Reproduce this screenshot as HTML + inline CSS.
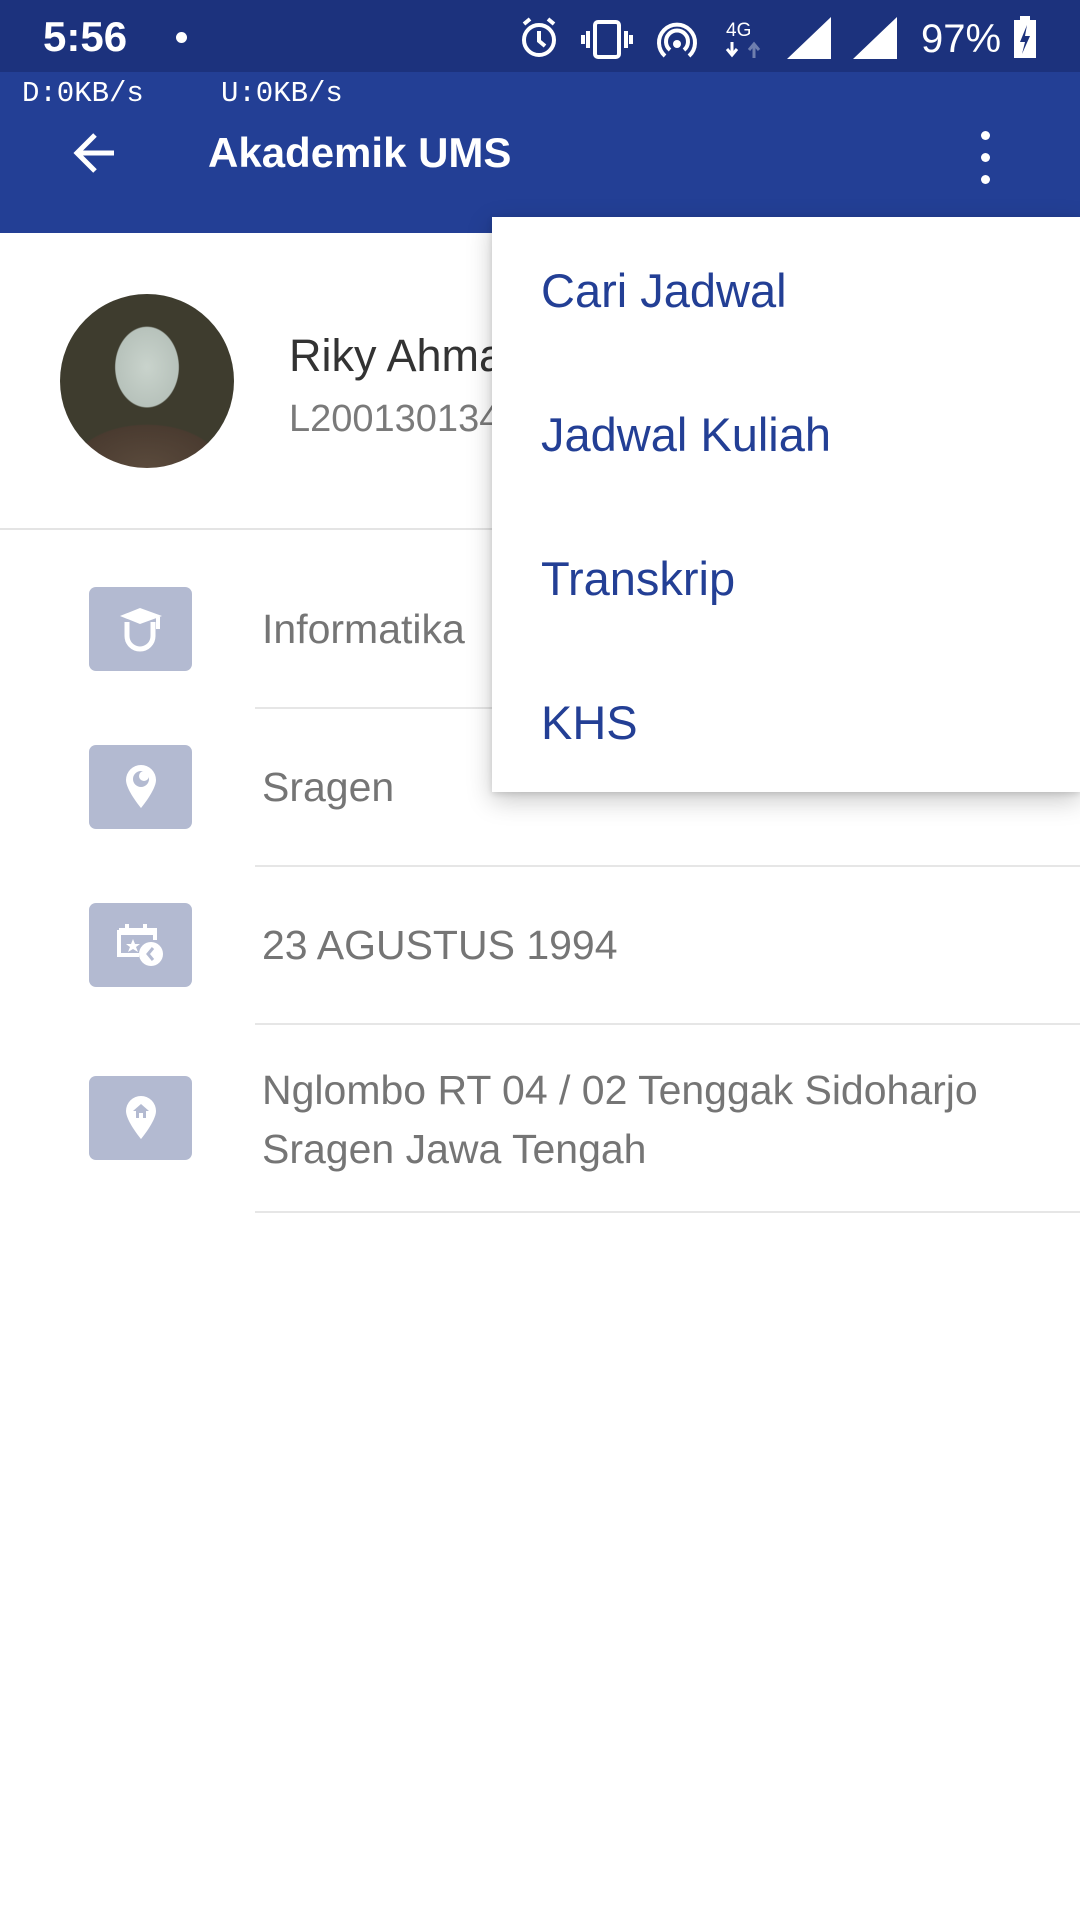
<!DOCTYPE html>
<html><head><meta charset="utf-8"><style>
*{margin:0;padding:0;box-sizing:border-box}
body{width:1080px;height:1920px;background:#fff;position:relative;overflow:hidden;font-family:"Liberation Sans",Roboto,sans-serif}
.abs{position:absolute}
.status{left:0;top:0;width:1080px;height:72px;background:#1c327d}
.bar{left:0;top:72px;width:1080px;height:161px;background:#233f95}
.t{white-space:nowrap;line-height:1}
.menu{left:492px;top:217px;width:588px;height:575px;background:#fff;box-shadow:0 8px 24px rgba(0,0,0,.22),0 2px 6px rgba(0,0,0,.12)}
.mi{position:absolute;left:49px;font-size:47px;color:#233f95;line-height:1}
.box{left:89px;width:103px;height:84px;background:#b3bad1;border-radius:7px}
.row{left:262px;font-size:41px;color:#757575;line-height:1}
.hr{left:255px;width:825px;height:2px;background:#e6e6e6}
</style></head><body>
<div class="abs status"></div>
<div class="abs bar"></div>
<div class="abs t" style="left:43px;top:16px;font-size:42px;color:#fff;font-weight:bold">5:56</div>
<div class="abs" style="left:176px;top:32px;width:11px;height:11px;border-radius:50%;background:#fff"></div>
<svg class="abs" style="left:520px;top:14px" width="520" height="48" viewBox="520 14 520 48">
 <g fill="none" stroke="#fff" stroke-width="4">
  <circle cx="539" cy="40" r="15"/><path d="M539 31v10l6 5M524 24l6-5M554 24l-6-5"/>
  <rect x="595" y="22" width="24" height="35" rx="3"/><path d="M588 31v17M626 31v17M583 35v9M631 35v9"/>
  <path d="M665 56a18 18 0 1 1 24 0M670 50a11 11 0 1 1 14 0"/>
 </g>
 <circle cx="677" cy="44" r="4" fill="#fff"/>
 <text x="726" y="36" font-size="19" fill="#fff" font-family="Liberation Sans">4G</text>
 <path d="M732 42v12M727 49l5 6 5-6" stroke="#fff" stroke-width="3" fill="none"/>
 <path d="M754 58v-13M749 50l5-6 5 6" stroke="#6f7fae" stroke-width="3" fill="none"/>
 <path d="M787 59L831 17V59Z M853 59L897 17V59Z" fill="#fff"/>
 <text x="921" y="52" font-size="40" fill="#fff" font-family="Liberation Sans">97%</text>
 <rect x="1014" y="20" width="22" height="38" fill="#fff"/><rect x="1020" y="16" width="10" height="5" fill="#fff"/>
 <path d="M1027 25l-7 17h5l-3 12 8-18h-5z" fill="#1c327d"/>
</svg>
<div class="abs t" style="left:22px;top:79px;font-size:29px;color:#fff;font-family:'Liberation Mono',monospace">D:0KB/s</div>
<div class="abs t" style="left:221px;top:79px;font-size:29px;color:#fff;font-family:'Liberation Mono',monospace">U:0KB/s</div>
<svg class="abs" style="left:70px;top:130px" width="50" height="46" viewBox="0 0 50 46"><path d="M44 23H8M25 5L7 23l18 18" stroke="#fff" stroke-width="5" fill="none"/></svg>
<div class="abs t" style="left:208px;top:132px;font-size:42px;color:#fff;font-weight:bold">Akademik UMS</div>
<div class="abs" style="left:981px;top:131px;width:9px;height:9px;border-radius:50%;background:#fff;box-shadow:0 22px 0 #fff,0 44px 0 #fff"></div>

<div class="abs" style="left:60px;top:294px;width:174px;height:174px;border-radius:50%;background:radial-gradient(ellipse 30% 38% at 50% 42%,#c9d3cc 0,#b7c2bb 60%,transparent 62%),radial-gradient(ellipse 60% 35% at 50% 100%,#5a4a3c 0,#4a3b30 70%,transparent 72%),#3e3c2e;overflow:hidden"></div>
<div class="abs t" style="left:289px;top:333px;font-size:45px;color:#333">Riky Ahmad</div>
<div class="abs t" style="left:289px;top:400px;font-size:38px;color:#7a7a7a">L200130134</div>
<div class="abs" style="left:0;top:528px;width:1080px;height:2px;background:#e4e4e4"></div>

<div class="abs box" style="top:587px"></div>
<svg class="abs" style="left:116px;top:602px" width="50" height="54" viewBox="0 0 50 54"><path d="M4 14L24 6 46 14 24 22Z" fill="#fff"/><path d="M42 15v12" stroke="#fff" stroke-width="4"/><path d="M11 20v14a13 13 0 0 0 26 0V20" stroke="#fff" stroke-width="5" fill="none"/></svg>
<div class="abs row" style="top:609px">Informatika</div>
<div class="abs hr" style="top:707px"></div>

<div class="abs box" style="top:745px"></div>
<svg class="abs" style="left:124px;top:763px" width="34" height="48" viewBox="0 0 34 48"><path d="M17 2a15 15 0 0 0-15 15c0 10 15 28 15 28s15-18 15-28A15 15 0 0 0 17 2z" fill="#fff"/><circle cx="17" cy="16" r="8" fill="#b3bad1"/><circle cx="20" cy="13" r="5" fill="#fff"/></svg>
<div class="abs row" style="top:767px">Sragen</div>
<div class="abs hr" style="top:865px"></div>

<div class="abs box" style="top:903px"></div>
<svg class="abs" style="left:116px;top:920px" width="50" height="50" viewBox="0 0 50 50"><path d="M11 4v6M29 4v6" stroke="#fff" stroke-width="4"/><path d="M3 10h36v10M3 10v25h20" stroke="#fff" stroke-width="4" fill="none"/><path d="M3 10h36v5H3z" fill="#fff"/><path d="M17 19l2 5h5l-4 3 2 5-5-3-5 3 2-5-4-3h5z" fill="#fff"/><circle cx="35" cy="34" r="12" fill="#fff"/><path d="M37 28l-5 6 5 6" stroke="#b3bad1" stroke-width="3" fill="none"/></svg>
<div class="abs row" style="top:925px">23 AGUSTUS 1994</div>
<div class="abs hr" style="top:1023px"></div>

<div class="abs box" style="top:1076px"></div>
<svg class="abs" style="left:124px;top:1094px" width="34" height="48" viewBox="0 0 34 48"><path d="M17 2a15 15 0 0 0-15 15c0 10 15 28 15 28s15-18 15-28A15 15 0 0 0 17 2z" fill="#fff"/><path d="M9 17l8-7 8 7h-3v7h-3v-5h-4v5h-3v-7z" fill="#b3bad1"/></svg>
<div class="abs row" style="top:1070px">Nglombo RT 04 / 02 Tenggak Sidoharjo</div>
<div class="abs row" style="top:1129px">Sragen Jawa Tengah</div>
<div class="abs hr" style="top:1211px"></div>

<div class="abs menu">
 <div class="mi" style="top:50px">Cari Jadwal</div>
 <div class="mi" style="top:194px">Jadwal Kuliah</div>
 <div class="mi" style="top:338px">Transkrip</div>
 <div class="mi" style="top:482px">KHS</div>
</div>
</body></html>
